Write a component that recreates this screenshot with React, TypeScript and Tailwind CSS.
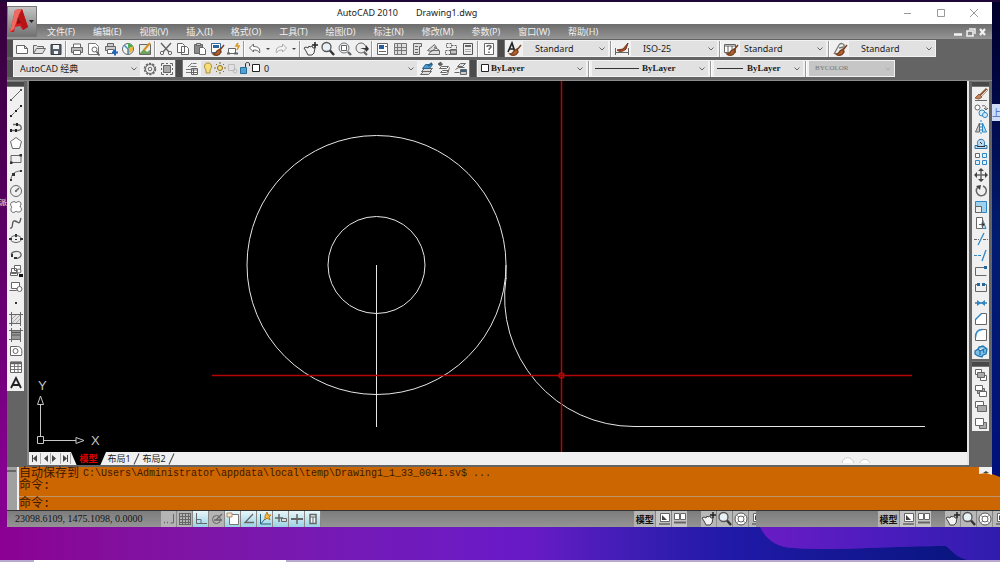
import type { ReactNode } from 'react';
import clsx from 'clsx';

const menus = ['文件(F)', '编辑(E)', '视图(V)', '插入(I)', '格式(O)', '工具(T)', '绘图(D)', '标注(N)', '修改(M)', '参数(P)', '窗口(W)', '帮助(H)'];

const hand = (
  <>
    <path d="M3 6l2 1 1-2 1 1 2-1 1 2 2 0-1 5-2 2H5L3 10l-2-3z" fill="#f4f4f4" stroke="#444" />
    <path d="M12 1v6M9 4h6" stroke="#222" strokeWidth="1.5" />
  </>
);
const lens = (
  <>
    <circle cx="6.5" cy="6" r="4.5" fill="#e8f2f6" stroke="#555" strokeWidth="1.3" />
    <path d="M10 9.5l4 4.5" stroke="#333" strokeWidth="2.4" />
  </>
);
const brush = (
  <path d="M15 4l-4 5M11 8l-3 2c-1 2-2 3-4 3 2 2 6 2 8-2z" stroke="#7a4322" fill="#b4632c" strokeWidth="1.5" />
);

// 16x16 drawings, keyed by tool name
const glyphs: Record<string, ReactNode> = {
  new: <path d="M2.5 4.5h8l3 3v5h-11zM10.5 4.5v3h3" fill="#fff" />,
  open: <path d="M2.5 12.5v-8h3l1 1h6v2M2.5 12.5l3-5h9l-3 5z" fill="#e2e2e2" />,
  save: <><path d="M3 3.5h10v10H3z" fill="#56606a" stroke="#333d47" /><path d="M5 4h6v4H5zM6 10h4v3H6z" fill="#f2f2f2" stroke="none" /></>,
  print: <><path d="M4.5 6V3h7v3" fill="#fff" /><path d="M2.5 6.5h11v5h-11z" fill="#bbb" /><path d="M4.5 9.5h7v4h-7z" fill="#fff" /></>,
  preview: <><path d="M2.5 2.5h7l3 3v8h-10z" fill="#fff" stroke="#777" /><circle cx="8.5" cy="8.5" r="2.5" fill="#fff" /><path d="M10.5 10.5l3 4" strokeWidth="1.7" /></>,
  publish: <><path d="M4.5 5.5v-3h6v3M2.5 5.5h10v4h-10z" fill="#ccc" /><path d="M4.5 8.5h6v4h-6z" fill="#fff" /><path d="M12 8.5v6M9 11.5h6" stroke="#1f66b8" strokeWidth="2" /></>,
  globe: <><circle cx="8" cy="8" r="5.5" fill="#f4f4f4" /><path d="M8 2.5v5l5-2A5 5 0 0 0 8 2.5z" fill="#4cae4f" stroke="none" /><path d="M8 7.5l5-2v4l-5 4z" fill="#efb23f" stroke="none" /><path d="M4 4l4 4v5.5" stroke="#3f8bc4" strokeWidth="1.5" /></>,
  markup: <><path d="M2.5 3.5h11v10h-11z" fill="#e7efe4" /><path d="M3 12l4-4 3 3 3-2v4H3z" fill="#6da25c" stroke="none" /><path d="M7 9l6-7" stroke="#d99022" strokeWidth="2" /></>,
  cut: <><path d="M3 2l8 9M13 2L5 11" strokeWidth="1.5" /><circle cx="4" cy="12" r="1.7" /><circle cx="12" cy="12" r="1.7" /></>,
  copy: <path d="M2.5 2.5h5l2 2v7h-7zM6.5 5.5h5l2 2v6h-7z" fill="#fff" stroke="#666" />,
  paste: <><path d="M2.5 3.5h8v9h-8z" fill="#898989" /><path d="M4.5 2.5h4v2h-4z" fill="#ccc" /><path d="M7.5 6.5h4l2 2v5h-6z" fill="#fff" /></>,
  match: <><path d="M2.5 2.5h9v9h-9z" fill="#fff" stroke="#366c9f" /><path d="M4 4h6v3H4z" fill="#2e629b" stroke="none" />{brush}</>,
  block: <><path d="M2.5 7.5h7v5h-7z" fill="#fff" /><path d="M1 12.5h3M8 12.5h4" strokeWidth="2" /><path d="M12 2l-2 3 3 0-2 4" stroke="#d8971e" strokeWidth="1.5" /></>,
  undo: <path d="M2.5 7l4-4v2.5c5 0 7 2 6 6.5-1-2-2-3-6-3V11z" fill="#fff" />,
  redo: <path d="M13.5 7l-4-4v2.5c-5 0-7 2-6 6.5 1-2 2-3 6-3V11z" fill="#f5f5f5" stroke="#aaa" />,
  hand,
  lens,
  lensWindow: <><circle cx="7" cy="7" r="5" fill="#e8f0f3" stroke="#777" /><path d="M4.5 4.5h5v5h-5z" fill="#fff" /><path d="M11 11l3 3" strokeWidth="2.4" /></>,
  lensBack: <><circle cx="7" cy="7" r="5" fill="#eee" stroke="#666" /><path d="M6 7h6V4l3 4-3 3V9" fill="#333" stroke="none" /><path d="M10 11l3 3" strokeWidth="2.2" /></>,
  properties: <><path d="M2.5 2.5h10v11h-10z" fill="#fff" stroke="#666" /><path d="M4 4h5v4H4z" fill="#285a9e" stroke="none" /><path d="M4 10.5h7M10 5.5h2" /></>,
  design: <><path d="M2.5 2.5h12v11h-12z" fill="#ddd" stroke="#777" /><path d="M5.5 3v10M9.5 3v10M3 6.5h11M3 9.5h11" stroke="#777" /></>,
  palette: <><path d="M4.5 2.5h8v3h-2v8h-6z" fill="#ddd" stroke="#666" /><path d="M6 5.5h3M6 8.5h3M6 11.5h3" /></>,
  sheets: <path d="M1.5 9.5l7-6 2 3-5 4zM5.5 9.5h8v4h-11zM8 6l5 3" fill="#ddd" stroke="#666" />,
  markset: <><path d="M3.5 2.5h5v4h-5zM8.5 4.5h5v4M2.5 9.5h5v4h-5z" fill="#eee" stroke="#666" strokeDasharray="2 1" /><path d="M7.5 8.5h6v5h-6z" fill="#888" /><path d="M8 11h5" stroke="#fff" /></>,
  calc: <><path d="M3.5 2.5h9v11h-9z" fill="#eee" stroke="#555" /><path d="M5 5h6" strokeWidth="2" /><path d="M5.5 8.5h5M5.5 10.5h5" strokeDasharray="1 1" /></>,
  help: <><path d="M3.5 2.5h9v11h-9z" fill="#fff" /><path d="M6 6c0-2 4-2 4 0 0 1-2 1-2 3M8 10.5v1.5" strokeWidth="1.5" /></>,
  textStyle: <><path d="M2 11L6 2l3 9M4 8h4" stroke="#222" strokeWidth="1.7" />{brush}</>,
  dimStyle: <><path d="M1.5 7v7M14.5 7v7M2 11.5h12" /><path d="M14 2L9 8 3 9c2 2 6 2 9-1z" fill="#a34a23" stroke="#7b3519" /></>,
  tableStyle: <><path d="M1.5 3.5h11v8h-11z" fill="#fff" /><path d="M1.5 5h11M5 5v6M9 5v6" />{brush}</>,
  leaderStyle: <><path d="M2 13l5-9c2-3 6-1 5 2l-5 1" stroke="#777" strokeWidth="1.3" />{brush}</>,
  gear: <><circle cx="8" cy="8" r="5.5" strokeWidth="1.5" strokeDasharray="2.3 1.15" /><circle cx="8" cy="8" r="4.5" /><circle cx="8" cy="8" r="1.8" /></>,
  workspace: <><path d="M4.5 4.5h7v7h-7z" fill="#aaa" /><path d="M2.5 5V2.5H5M11 2.5h2.5V5M13.5 11v2.5H11M5 13.5H2.5V11" /><path d="M7 2.5h2M7 13.5h2M2.5 7v2M13.5 7v2" /></>,
  layers: <><path d="M8.5 2.5h4M6.5 5.5h6M4 6l4-4M2 8.5h6M2 11.5h6" stroke="#777" /><path d="M7.5 7.5h6v6h-6z" fill="#fff" /><path d="M8 9h5M8 11.5h5M9.5 8v5" /></>,
  layerCurrent: <><path d="M1.5 13.5l3-3h8l-3 3zM2.5 10.5l3-3h8l-3 3z" fill="#ddd" /><path d="M3.5 7.5l3-4h7l-3 4z" fill="#4f9bd0" stroke="#27658f" /><path d="M9 5l4-3" stroke="#27658f" strokeWidth="2" /></>,
  layerPrev: <><path d="M5.5 5.5h7l-2 2h-7zM6.5 9.5h6l-2 2h-6zM5.5 13.5h6l2-7" fill="#fff" /><path d="M4 5V3h3M2 3l3-2v4z" fill="#333" /></>,
  layerState: <><path d="M4.5 5.5l3-3h5l-3 3zM2.5 8.5l3-2h6M1.5 11.5h5" fill="#ddd" /><path d="M7.5 8.5h6v5h-6z" fill="#ccc" /><path d="M8 10h5" stroke="#35648b" strokeWidth="2" /></>,

  line: <><path d="M3 13L13 3" /><path d="M2 12h2v2H2zM12 2h2v2h-2z" fill="#555" stroke="none" /></>,
  xline: <><path d="M3 13L13 3" strokeDasharray="5 1" /><path d="M2 12h2v2H2zM12 2h2v2h-2zM7 7h2v2H7z" fill="#222" stroke="none" /></>,
  pline: <><path d="M3 11.5h7c5 0 4-6-1-6H5" stroke="#666" strokeWidth="1.3" /><path d="M2 10h2v3H2zM8 4h2v3H8zM7 10h2v3H7z" fill="#222" stroke="none" /></>,
  polygon: <path d="M8 2.5l5.5 4-2 7h-7l-2-7z" fill="#fff" />,
  rect: <><path d="M3 4.5h10v7H3z" /><path d="M2 10.5h2.5V13H2zM11.5 3H14v2.5h-2.5z" fill="#333" stroke="none" /></>,
  arc: <><path d="M3 13c0-5 3-9 10-9" /><path d="M2 12h2v2H2zM4 6h3v3H4zM12 3h2v2h-2z" fill="#333" stroke="none" /></>,
  circle: <><circle cx="8" cy="8" r="5.5" /><path d="M8 8l3-3M7 8h2M8 7v2" strokeWidth="1.5" /></>,
  cloud: <path d="M5 3c1-1 3 0 3 1 1-2 5-2 5 1 0 1-1 2-1 3 2 0 2 5-1 5-1 0-2 0-3-1-1 2-5 2-5-1 0-1 0-2 1-3-2-1-2-5 1-5z" fill="#fff" />,
  spline: <path d="M2 13c4 1 1-8 5-7s4 5 6-3" stroke="#555" strokeWidth="1.3" />,
  ellipse: <><ellipse cx="8" cy="8" rx="5.5" ry="3.5" /><path d="M1 7h3v2H1zM12 7h3v2h-3zM7 3h2v3H7zM7 8h2v1H7z" fill="#333" stroke="none" /></>,
  ellipseArc: <><path d="M4 9c-3-5 8-6 9-2s-5 5-7 4" strokeWidth="1.3" /><path d="M3 7h2v3H3zM6 10h3v2H6z" fill="#333" stroke="none" /></>,
  insert: <><path d="M6.5 2.5h6v5h-6zM3.5 5.5h5v5h-5zM2.5 9.5h7v3h-7z" fill="#fff" /><circle cx="11" cy="8" r="2" fill="#fff" /><path d="M11 11h4v3h-4z" fill="#111" stroke="none" /></>,
  makeBlock: <><path d="M3.5 3.5h8v6h-8zM1.5 11.5h7l2-3" fill="#fff" /><circle cx="11.5" cy="10" r="2.5" fill="#fff" /></>,
  point: <path d="M7 7h2v2H7z" fill="#333" stroke="none" />,
  hatch: <><path d="M3.5 3.5h9v9h-9z" fill="#e4e4e4" /><path d="M4 8l4-4M4 12l8-8M8 12l4-4" stroke="#aaa" /><path d="M1 3.5h3M3.5 1v3M12 3.5h3M12.5 1v3M1 12.5h3M3.5 12v3M12.5 12v3" /></>,
  gradient: <><path d="M3.5 3.5h9v9h-9z" fill="#999" /><path d="M4 5.5h8M4 8h8" stroke="#555" /><path d="M1 3.5h3M3.5 1v3M12 3.5h3M12.5 1v3M1 12.5h3M3.5 12v3M12.5 12v3" /></>,
  region: <><path d="M2.5 3.5h7c4 0 5 4 4 9h-11z" fill="#fff" /><circle cx="7.5" cy="8" r="2.5" /></>,
  table: <><path d="M2.5 3h11v10.5h-11z" fill="#fff" /><path d="M2.5 4h11" strokeWidth="2.5" /><path d="M6.5 5v8M10 5v8M3 7.5h10M3 10.5h10" stroke="#777" /></>,
  mtext: <path d="M3 13L8 3l5 10M5 10h6" stroke="#222" strokeWidth="1.8" />,

  erase: <><path d="M14 2L7 9" stroke="#8c5a3a" strokeWidth="3" /><path d="M14 3L8 9" stroke="#ddd" /><path d="M6 7l3 3-3 2-4-1z" fill="#c88452" stroke="#8c5a3a" /><path d="M2 13.5h12" /></>,
  copyObj: <><circle cx="4.5" cy="4.5" r="2.5" fill="#fff" /><path d="M9 3c3-1 4 0 4 3M11 5l2 2 2-2" /><circle cx="9" cy="10" r="3" stroke="#2f86c4" fill="#d9edf8" /><circle cx="12" cy="12" r="2.5" stroke="#2f86c4" fill="#d9edf8" /></>,
  mirror: <><path d="M6.5 4v9h-4z" fill="#ccc" /><path d="M9.5 4v9h4z" fill="#b7dcf2" stroke="#2f86c4" /><path d="M8 1v14" stroke="#2f86c4" strokeDasharray="2 1" /></>,
  offset: <><path d="M2 13.5h12v-3h-3c2-4-1-7-4-6s-3 3-2 6H2z" fill="#b7dcf2" stroke="#2f74a8" /><path d="M4 11.5h8M7 7l2 2" stroke="#333" /></>,
  array: <><path d="M2.5 2.5h4v4h-4z" fill="#fff" /><path d="M9.5 2.5h4v4h-4zM2.5 9.5h4v4h-4zM9.5 9.5h4v4h-4z" fill="#e1f1fb" stroke="#2f86c4" /></>,
  move: <><path d="M8 3v10M3 8h10" strokeWidth="1.5" /><path d="M8 1l3 3H5zM8 15l3-3H5zM1 8l3-3v6zM15 8l-3-3v6z" fill="#444" stroke="none" /></>,
  rotate: <><path d="M5 4a5 5 0 1 0 5-1" strokeWidth="1.5" /><path d="M3 3l5-1-1 5z" fill="#444" stroke="none" /></>,
  scale: <><path d="M2.5 2.5h11v11h-11z" fill="#9fd0ec" stroke="#2f86c4" /><path d="M2.5 7.5h6v6h-6z" fill="#eee" /></>,
  stretch: <><path d="M9 3l4 10.5H9z" fill="#b7dcf2" stroke="#2f86c4" /><path d="M3.5 2.5h6v11h-6z" fill="#fff" /><path d="M6 9.5h3M9 7.5l3 2-3 2z" fill="#222" /></>,
  trim: <><path d="M1 8.5h5M10 8.5h5" strokeDasharray="3 1" /><path d="M5 14L11 2" stroke="#2f86c4" strokeWidth="1.3" /></>,
  extend: <><path d="M1 8.5h7" stroke="#2f86c4" strokeDasharray="3 1" /><path d="M9 14l4-11" stroke="#2f86c4" strokeWidth="1.3" /></>,
  breakPt: <><path d="M13 4.5H2.5v8h11" /><path d="M11 3h3v3h-3z" fill="#2468a0" stroke="none" /></>,
  breakObj: <><path d="M5 5.5H2.5v7h11v-7H11" /><path d="M4 4h3v3H4zM9 4h3v3H9z" fill="#2468a0" stroke="none" /></>,
  join: <><path d="M2 8h12" stroke="#2468a0" strokeWidth="1.3" /><path d="M4 5l4 3-4 3zM12 5L8 8l4 3z" fill="#2f86c4" stroke="none" /></>,
  chamfer: <><path d="M8 2.5h5.5v11h-11V8" fill="#fff" /><path d="M2.5 8.5l6-6" stroke="#2f86c4" strokeWidth="1.5" /></>,
  fillet: <><path d="M9 2.5h4.5v11h-11V10" fill="#fff" /><path d="M2.5 10.5c0-5 2-8 7-8" stroke="#2f86c4" strokeWidth="1.5" /></>,
  explode: <path d="M2 8l3-2 1-2 4-1 4 3-1 5-3 1-1 2-4-1-3-2zM5 6l2 2 6-3M7 8v4M10 6l1 4" fill="#7fc0e8" stroke="#2374ad" strokeWidth="1.3" />,
  orderFront: <><path d="M2.5 2.5h6v5h-6zM7.5 8.5h6v5h-6z" fill="#fff" /><path d="M4.5 5.5h7v5h-7z" fill="#aaa" /></>,
  orderBack: <><path d="M4.5 5.5h7v5h-7z" fill="#aaa" /><path d="M2.5 2.5h7v5h-7zM6.5 8.5h7v5h-7z" fill="#fff" /></>,
  orderAbove: <><path d="M2.5 2.5h8v6h-8z" fill="#fff" /><path d="M4.5 6.5h9v6h-9z" fill="#aaa" /></>,
  orderUnder: <><path d="M6.5 7.5h7v6h-7z" fill="#aaa" /><path d="M2.5 3.5h8v7h-8z" fill="#fff" /></>,

  snap: <><path d="M12.5 3v9h-3" /><path d="M3 11.5h1M6 11.5h1" strokeWidth="1.5" /></>,
  grid: <path d="M2 2.5h12M2 5.5h12M2 8.5h12M2 11.5h12M2.5 2v12M5.5 2v12M8.5 2v12M11.5 2v12M2 13.5h12M13.5 2v12" stroke="#666" />,
  ortho: <><path d="M3.5 2v10.5H14" /><path d="M4 8.5h4v4" stroke="#578" /></>,
  polar: <><circle cx="7.5" cy="8.5" r="4" /><path d="M5 9h8M7 9l6-6" strokeWidth="1.3" /></>,
  osnap: <><path d="M4.5 3.5h9v10h-9z" fill="#fff" stroke="#777" /><path d="M2 2h5v4H2z" fill="#f3e7d8" stroke="#b98d65" /></>,
  otrack: <path d="M12 3l-8 8.5h9" strokeWidth="1.3" />,
  ducs: <><path d="M3.5 3v10H14M3.5 13L9 7" stroke="#25637d" /><path d="M10 1l1 3 3 0-2 2 1 3-3-2-2 2 0-4z" fill="#f4bd42" stroke="#b77d21" /></>,
  dyn: <><path d="M2 7h8M6 3v8" strokeWidth="1.5" /><path d="M8.5 7.5h5v3h-5z" fill="#ddd" /></>,
  lwt: <><path d="M2 8h12" strokeWidth="2" /><path d="M8 3v10" strokeWidth="1.5" /></>,
  qp: <><path d="M5 3.5h6v9H5z" fill="#eef7f9" strokeWidth="1.5" /><path d="M5 6h6M8 6v6" /></>,
  layout: <><path d="M4.5 2.5h9v8h-9z" fill="#fff" /><path d="M6 4l5 5H6z" fill="#444" stroke="none" /><path d="M3 13h11" strokeWidth="1.5" /></>,
  quickView: <><path d="M2.5 2.5h5v6h-5zM8.5 2.5h5v6h-5z" fill="#fff" /><path d="M2 11.5h12" strokeWidth="2" /></>,
  wheel: <><circle cx="8" cy="8" r="6" fill="#fff" stroke="#555" /><circle cx="8" cy="8" r="3" /><path d="M3 4l3 2M13 4l-3 2M3 12l3-2M13 12l-3-2" stroke="#888" /></>,
};

const standardTools = [
  ['new', 'open', 'save'],
  ['print', 'preview', 'publish', 'globe', 'markup'],
  ['cut', 'copy', 'paste', 'match', 'block'],
];
const zoomTools = ['hand', 'lens', 'lensWindow', 'lensBack'];
const paletteTools = ['properties', 'design', 'palette', 'sheets', 'markset', 'calc'];
const drawTools = ['line', 'xline', 'pline', 'polygon', 'rect', 'arc', 'circle', 'cloud', 'spline', 'ellipse', 'ellipseArc', 'insert', 'makeBlock', 'point', 'hatch', 'gradient', 'region', 'table', 'mtext'];
const modifyTools = ['erase', 'copyObj', 'mirror', 'offset', 'array', 'move', 'rotate', 'scale', 'stretch', 'trim', 'extend', 'breakPt', 'breakObj', 'join', 'chamfer', 'fillet', 'explode'];
const orderTools = ['orderFront', 'orderBack', 'orderAbove', 'orderUnder'];
const toggles = [
  { name: 'snap', on: false },
  { name: 'grid', on: false },
  { name: 'ortho', on: true },
  { name: 'polar', on: false },
  { name: 'osnap', on: true },
  { name: 'otrack', on: true },
  { name: 'ducs', on: true },
  { name: 'dyn', on: true },
  { name: 'lwt', on: true },
  { name: 'qp', on: true },
];

function Glyph({ name }: { name: string }) {
  return (
    <svg viewBox="0 0 16 16" fill="none" stroke="#666" className="h-4 w-4 shrink-0" aria-hidden="true">
      {glyphs[name]}
    </svg>
  );
}

function Tool({ name, className = 'h-4 w-[17px]' }: { name: string; className?: string }) {
  return (
    <button type="button" aria-label={name} className={clsx('flex shrink-0 items-center justify-center', className)}>
      <Glyph name={name} />
    </button>
  );
}

function Sep() {
  return <span className="mx-[1px] h-4 w-[2px] shrink-0 border-r border-white bg-[#999]" />;
}

function Grip() {
  return <span className="h-[17px] w-2 shrink-0 border-x border-[#777] bg-[#4c4c4c]" />;
}

function Drop({ label, value, width, className, disabled, children }: { label: string; value: string; width: string; className?: string; disabled?: boolean; children?: ReactNode }) {
  return (
    <div className={clsx('relative flex h-[17px] shrink-0', width)}>
      <select
        aria-label={label}
        disabled={disabled}
        className={clsx(
          'block h-[17px] w-full appearance-none border border-[#f2f2f2] leading-none',
          disabled ? 'bg-[#c6c6c6] text-[#777]' : 'bg-[#e1e1e1] text-[#1c1c1c]',
          className,
        )}
      >
        <option>{value}</option>
      </select>
      {children}
      <svg viewBox="0 0 8 8" className="pointer-events-none absolute right-[3px] top-[5px] h-2 w-2" fill="none" stroke={disabled ? '#aaa' : '#666'}>
        <path d="M1.5 2.5L4 5l2.5-2.5" />
      </svg>
    </div>
  );
}

function Caret({ label }: { label: string }) {
  return (
    <button type="button" aria-label={label} className="flex h-4 w-[9px] items-center justify-center">
      <svg viewBox="0 0 4 4" className="h-1 w-1 fill-[#444]"><path d="M0 1h4L2 3z" /></svg>
    </button>
  );
}

function TitleBar() {
  return (
    <header className="relative">
      <div className="flex h-[22px] items-center bg-white pl-[330px] pr-3 text-[9px] text-[#222]">
        <h1 className="flex gap-[18px]">
          <span>AutoCAD 2010</span>
          <span>Drawing1.dwg</span>
        </h1>
        <div className="ml-auto flex gap-[21px]">
          <button type="button" aria-label="最小化"><svg viewBox="0 0 12 12" className="h-3 w-3" stroke="#999"><path d="M2 6.5h7" /></svg></button>
          <button type="button" aria-label="最大化"><svg viewBox="0 0 12 12" className="h-3 w-3" fill="none" stroke="#999"><path d="M2.5 2.5h7v7h-7z" /></svg></button>
          <button type="button" aria-label="关闭"><svg viewBox="0 0 12 12" className="h-3 w-3" stroke="#999"><path d="M2 2l8 8M10 2l-8 8" /></svg></button>
        </div>
      </div>
      <nav className="flex h-[15px] items-center gap-[18px] bg-gradient-to-b from-[#6c6c6c] to-[#969696] pl-10 pr-1 text-[9px] leading-none text-[#f0f0f0]">
        {menus.map((m) => (
          <button key={m} type="button" className="shrink-0">{m}</button>
        ))}
        <svg viewBox="0 0 36 12" className="ml-auto h-3 w-9 shrink-0" fill="none" stroke="#f2f2f2" strokeWidth="1.5">
          <path d="M2 8.5h8" strokeWidth="2.5" />
          <path d="M15 5h6v5h-6zM17 3h6v5" />
          <path d="M28 3l5 6M33 3l-5 6" strokeWidth="2.2" />
        </svg>
      </nav>
      <button type="button" aria-label="应用程序菜单" className="absolute left-0 top-1 flex h-[31px] w-[30px] items-center border border-[#777] bg-gradient-to-b from-[#c4c4c4] to-[#737373]">
        <svg viewBox="0 0 28 29" className="h-full w-full">
          <path d="M2 25L7 3l7-1 6 18-5 3-3-4-5 1-1 5z" fill="#d41c20" />
          <path d="M7 3l7-1-3 5-5 15-4 3z" fill="#ee6b62" />
          <path d="M10 10l3 6-4 1z" fill="#811013" />
          <path d="M14 2l6 18-5 3-4-13z" fill="#b81418" />
          <path d="M21 13h5l-2.5 3z" fill="#222" />
        </svg>
      </button>
    </header>
  );
}

function Toolbars() {
  return (
    <div className="bg-[#646464] pb-[3px] pt-[1px]">
      <div className="flex h-[17px] items-center">
        <span className="h-full w-[6px] shrink-0 bg-[#505050]" />
        <div className="flex h-full shrink-0 items-center bg-[#f0f0f0]">
          {standardTools.map((group) => (
            <div key={group[0]} className="flex items-center">
              {group.map((name) => <Tool key={name} name={name} />)}
              <Sep />
            </div>
          ))}
          <Tool name="undo" />
          <Caret label="undo list" />
          <Tool name="redo" />
          <Caret label="redo list" />
          <Sep />
          {zoomTools.map((name) => <Tool key={name} name={name} />)}
          <Sep />
          {paletteTools.map((name) => <Tool key={name} name={name} />)}
          <Sep />
          <Tool name="help" />
        </div>
        <Grip />
        <div className="flex h-full shrink-0 items-center bg-[#f0f0f0]">
          <Tool name="textStyle" />
          <Drop label="文字样式" value="Standard" width="w-[87px]" className="pl-3 text-[9px]" />
          <Sep />
          <Tool name="dimStyle" />
          <Drop label="标注样式" value="ISO-25" width="w-[88px]" className="pl-3 text-[9px]" />
          <Sep />
          <Tool name="tableStyle" />
          <Drop label="表格样式" value="Standard" width="w-[88px]" className="pl-1 text-[9px]" />
          <Sep />
          <Tool name="leaderStyle" />
          <Drop label="引线样式" value="Standard" width="w-[88px]" className="pl-3 text-[9px]" />
        </div>
      </div>
      <div className="mt-[3px] flex h-[17px] items-center">
        <span className="h-full w-[6px] shrink-0 bg-[#505050]" />
        <div className="flex h-full shrink-0 items-center bg-[#f0f0f0]">
          <Drop label="工作空间" value="AutoCAD 经典" width="w-[128px]" className="pl-[6px] text-[9px]" />
          <Tool name="gear" />
          <Tool name="workspace" />
        </div>
        <Grip />
        <div className="flex h-full shrink-0 items-center bg-[#f0f0f0]">
          <Tool name="layers" />
          <Drop label="图层" value="0" width="w-[218px]" className="pl-[63px] text-[9px]">
            <svg viewBox="0 0 64 17" fill="none" className="pointer-events-none absolute left-0.5 top-0 h-[17px] w-16">
              <path d="M4 10c-3-4-1-7 2-7s5 3 2 7v3H4z" fill="#f8df75" stroke="#a98c3a" />
              <circle cx="18" cy="8" r="2.5" fill="#f8df75" stroke="#8a6f25" />
              <path d="M18 2v2M18 12v2M12 8h2M22 8h2M14 4l1 1M21 11l1 1M22 4l-1 1M14 12l1-1" stroke="#8a6f25" />
              <path d="M26.5 4.5h6v6h-6z" stroke="#bbb" />
              <circle cx="33" cy="11" r="2" stroke="#bbb" />
              <path d="M38.5 7.5h6v6h-6z" fill="#4da3d5" stroke="#286b97" />
              <path d="M43.5 7V4c0-2 4-2 4 0v2" stroke="#333" />
              <path d="M50.5 4.5h7v7h-7z" fill="#fff" stroke="#222" />
            </svg>
          </Drop>
          <Tool name="layerCurrent" />
          <Tool name="layerPrev" />
          <Tool name="layerState" />
        </div>
        <Grip />
        <div className="flex h-full shrink-0 items-center bg-[#f0f0f0]">
          <Drop label="颜色" value="ByLayer" width="w-[110px]" className="pl-[13px] font-['Liberation_Serif',serif] text-[9px] font-bold">
            <svg viewBox="0 0 8 8" className="pointer-events-none absolute left-1 top-1 h-2 w-2"><path d="M.5.5h7v7h-7z" fill="#fff" stroke="#222" /></svg>
          </Drop>
          <Sep />
          <Drop label="线型" value="ByLayer" width="w-[118px]" className="pl-[50px] font-['Liberation_Serif',serif] text-[9px] font-bold">
            <span className="pointer-events-none absolute left-1 top-2 h-px w-11 bg-[#333]" />
          </Drop>
          <Sep />
          <Drop label="线宽" value="ByLayer" width="w-[91px]" className="pl-[33px] font-['Liberation_Serif',serif] text-[9px] font-bold">
            <span className="pointer-events-none absolute left-1 top-2 h-px w-[26px] bg-[#333]" />
          </Drop>
          <Sep />
          <Drop label="打印样式" value="BYCOLOR" width="w-[87px]" className="pl-[6px] font-['Liberation_Serif',serif] text-[7px]" disabled />
        </div>
      </div>
    </div>
  );
}

function Palette({ tools }: { tools: string[] }) {
  return (
    <div className="flex w-[17px] flex-col">
      <span className="h-[6px] border-y border-[#777] bg-[#484848]" />
      <div className="flex flex-col bg-[#f0f0f0]">
        {tools.map((name) => <Tool key={name} name={name} />)}
      </div>
    </div>
  );
}

function Drawing() {
  return (
    <svg viewBox="29 81 938 371" className="block w-full bg-black" fill="none" stroke="#e6e6e6">
      <circle cx="376.5" cy="265" r="129.5" />
      <circle cx="376.5" cy="265" r="48.5" />
      <path d="M376.5 265v162" />
      <path d="M506 278A129.5 129.5 0 0 0 634 426.5H925" />
      <path d="M506 265v14" />
      <g stroke="#b40606" strokeWidth="1.5">
        <path d="M561.5 81v371" />
        <path d="M212 375.5h700" />
        <circle cx="561.5" cy="375.5" r="2.5" />
      </g>
      <g stroke="#c8c8c8">
        <path d="M37.5 436.5h6v7h-6zM40.5 436v-31M44 440.5h32" />
        <path d="M40.5 396l-3 8.5h6zM84 440.5l-8-3v6z" />
      </g>
      <g fill="#c4c4c4" stroke="none" className="font-['Liberation_Sans',sans-serif] text-[13px]">
        <text x="38" y="390">Y</text>
        <text x="91" y="445">X</text>
      </g>
    </svg>
  );
}

function LayoutTabs() {
  return (
    <div className="relative flex h-[13px] items-center bg-[#f0f0f0] text-[9px] leading-none text-[#222]">
      <svg viewBox="0 0 42 13" className="h-[13px] w-[42px] shrink-0" fill="#444">
        <path d="M3 3h1v7H3zM8 3v7L4 6.500zM19 3v7l-4-3.500zM23 3v7l4-3.500zM34 3v7l4-3.500zM38 3h1v7h-1z" />
        <path d="M11.5 1v11M21.5 1v11M31.5 1v11M41.5 1v11" stroke="#aaa" />
      </svg>
      <button type="button" className="h-full w-[35px] bg-black font-bold text-[#e00000] [clip-path:polygon(0_0,100%_0,84%_100%,16%_100%)]">模型</button>
      <button type="button" className="w-[26px]">布局1</button>
      <span className="ml-1 h-3 w-px rotate-[25deg] bg-[#444]" />
      <button type="button" className="ml-1 w-[26px]">布局2</button>
      <span className="ml-1 h-3 w-px rotate-[25deg] bg-[#444]" />
      <svg viewBox="0 0 32 8" className="ml-auto mr-[95px] h-2 w-8" fill="#fff" stroke="#ccc">
        <path d="M2 8c1-7 10-7 12 0M20 8c1-5 8-5 10 0" />
      </svg>
    </div>
  );
}

function CommandLine() {
  return (
    <section className="relative flex h-[43px] bg-[#c60] text-[12px] leading-none text-[#3c1800] font-['Liberation_Mono','Noto_Sans_CJK_SC',monospace]">
      <div className="w-3 shrink-0 border-r-2 border-[#f0f0f0] bg-[#a0a0a0] pt-[3px]">
        <span className="block h-[2px] w-[9px] bg-[#666]" />
      </div>
      <div className="min-w-0 flex-1">
        <div className="h-[30px] border-b border-[#c0946a] pt-px">
          <p className="flex h-3 items-center gap-1 whitespace-nowrap">
            自动保存到 <span className="text-[10px]">C:\Users\Administrator\appdata\local\temp\Drawing1_1_33_0041.sv$ ...</span>
          </p>
          <p className="flex h-3 items-center">命令:</p>
        </div>
        <div className="flex h-[13px] items-center">
          <label htmlFor="command">命令:</label>
          <input id="command" className="h-3 min-w-0 flex-1 bg-transparent outline-none" />
        </div>
      </div>
      <svg viewBox="0 0 21 12" className="absolute right-0 top-0 h-3 w-[21px]">
        <path d="M0 0h13v8L7 6 0 7z" fill="#f0f0f0" />
        <path d="M13 0h8v10l-8-3z" fill="#00107a" />
        <path d="M4 6l3-2 3 2z" fill="#444" />
      </svg>
    </section>
  );
}

function ViewGroup() {
  return (
    <div className="flex h-4 w-[122px] shrink-0 gap-px overflow-hidden">
      <button type="button" className="w-[21px] shrink-0 bg-[#b4b4b4] text-[9px] font-bold leading-none text-[#111]">模型</button>
      <Tool name="layout" className="w-[15px] bg-[#c4c4c4]" />
      <Tool name="quickView" className="w-[15px] bg-[#c4c4c4]" />
      <span className="w-3 shrink-0" />
      <Tool name="hand" className="w-[15px] bg-[#b8b8b8]" />
      <Tool name="lens" className="w-[15px] bg-[#b8b8b8]" />
      <Tool name="wheel" className="w-[15px] bg-[#b8b8b8]" />
      <Tool name="layout" className="w-[15px] bg-[#b8b8b8]" />
    </div>
  );
}

function StatusBar() {
  return (
    <footer className="flex h-[17px] items-center border-t border-[#333] bg-gradient-to-b from-[#7c7c7c] to-[#949494]">
      <span className="w-[154px] shrink-0 whitespace-nowrap pl-2 font-['Liberation_Serif',serif] text-[10px] leading-none text-[#161616]">23098.6109, 1475.1098, 0.0000</span>
      <div className="flex shrink-0">
        {toggles.map(({ name, on }) => (
          <button
            key={name}
            type="button"
            aria-label={name}
            aria-pressed={on}
            className={clsx('flex h-4 w-4 items-center justify-center overflow-hidden border-r border-[#888]', on ? 'bg-gradient-to-b from-[#e8f6fa] to-[#9ad2e4]' : 'bg-[#b4b4b4]')}
          >
            <Glyph name={name} />
          </button>
        ))}
      </div>
      <span className="flex-[18]" />
      <ViewGroup />
      <span className="flex-[7]" />
      <ViewGroup />
    </footer>
  );
}

export default function App() {
  return (
    <div className="flex min-h-screen flex-col overflow-hidden bg-[#1d0838] pt-[2px] font-['Noto_Sans','Noto_Sans_CJK_SC',sans-serif]">
      <div className="flex">
        <aside className="relative w-[7px] shrink-0 overflow-hidden bg-gradient-to-b from-[#33003a] via-[#5c0065] to-[#85008f]">
          <span className="absolute right-0 top-[196px] text-[8px] leading-none text-white">派</span>
        </aside>
        <main className="min-w-0 flex-1 bg-[#646464]">
          <TitleBar />
          <Toolbars />
          <div className="flex border-t border-[#8c8c8c]">
            <div className="w-[22px] shrink-0 border-r-2 border-[#858585]">
              <Palette tools={drawTools} />
            </div>
            <div className="min-w-0 flex-1 border-r-2 border-[#e6e6e6]">
              <Drawing />
              <LayoutTabs />
            </div>
            <div className="flex w-[23px] shrink-0 flex-col gap-[2px] pl-[3px]">
              <Palette tools={modifyTools} />
              <Palette tools={orderTools} />
            </div>
          </div>
          <div className="h-[2px]" />
        </main>
        <aside className="relative w-2 shrink-0 overflow-hidden bg-gradient-to-b from-[#00002a] via-[#001c70] to-[#00107a]">
          <span className="absolute left-0 top-[102px] h-[17px] w-2 overflow-hidden bg-[#cfdcf8] text-[9px] leading-[17px] text-[#3d65c2]">上</span>
        </aside>
      </div>
      <div className="bg-[#85008f] pl-[7px]">
        <CommandLine />
        <StatusBar />
      </div>
      <div className="relative min-h-[33px] flex-1 bg-gradient-to-r from-[#8b0092] via-[#6a1ac6] to-[#2b1cb0]">
        <svg viewBox="0 0 1000 33" preserveAspectRatio="none" className="absolute inset-0 h-full w-full">
          <defs>
            <linearGradient id="deep" x1="0" x2="1">
              <stop offset="0" stopColor="#2020a8" stopOpacity="0" />
              <stop offset=".45" stopColor="#2019a8" />
              <stop offset="1" stopColor="#08157e" />
            </linearGradient>
            <linearGradient id="wave" x1="0" x2="1">
              <stop offset="0" stopColor="#6a1cc4" />
              <stop offset=".5" stopColor="#4c1cbe" />
              <stop offset="1" stopColor="#2f1cae" />
            </linearGradient>
          </defs>
          <path d="M540 33V0h220c7 13 16 20 34 21 50 3 90-2 152-2 8 7 12 12 22 14z" fill="url(#deep)" />
          <path d="M760 0c7 13 16 20 34 21 50 3 90-2 152-2 8 7 12 12 22 14h32V0z" fill="url(#wave)" />
        </svg>
      </div>
      <div className="flex h-[2px] bg-[#b9a8cf]">
        <span className="ml-[3.4%] w-[25.2%] bg-white" />
      </div>
    </div>
  );
}
